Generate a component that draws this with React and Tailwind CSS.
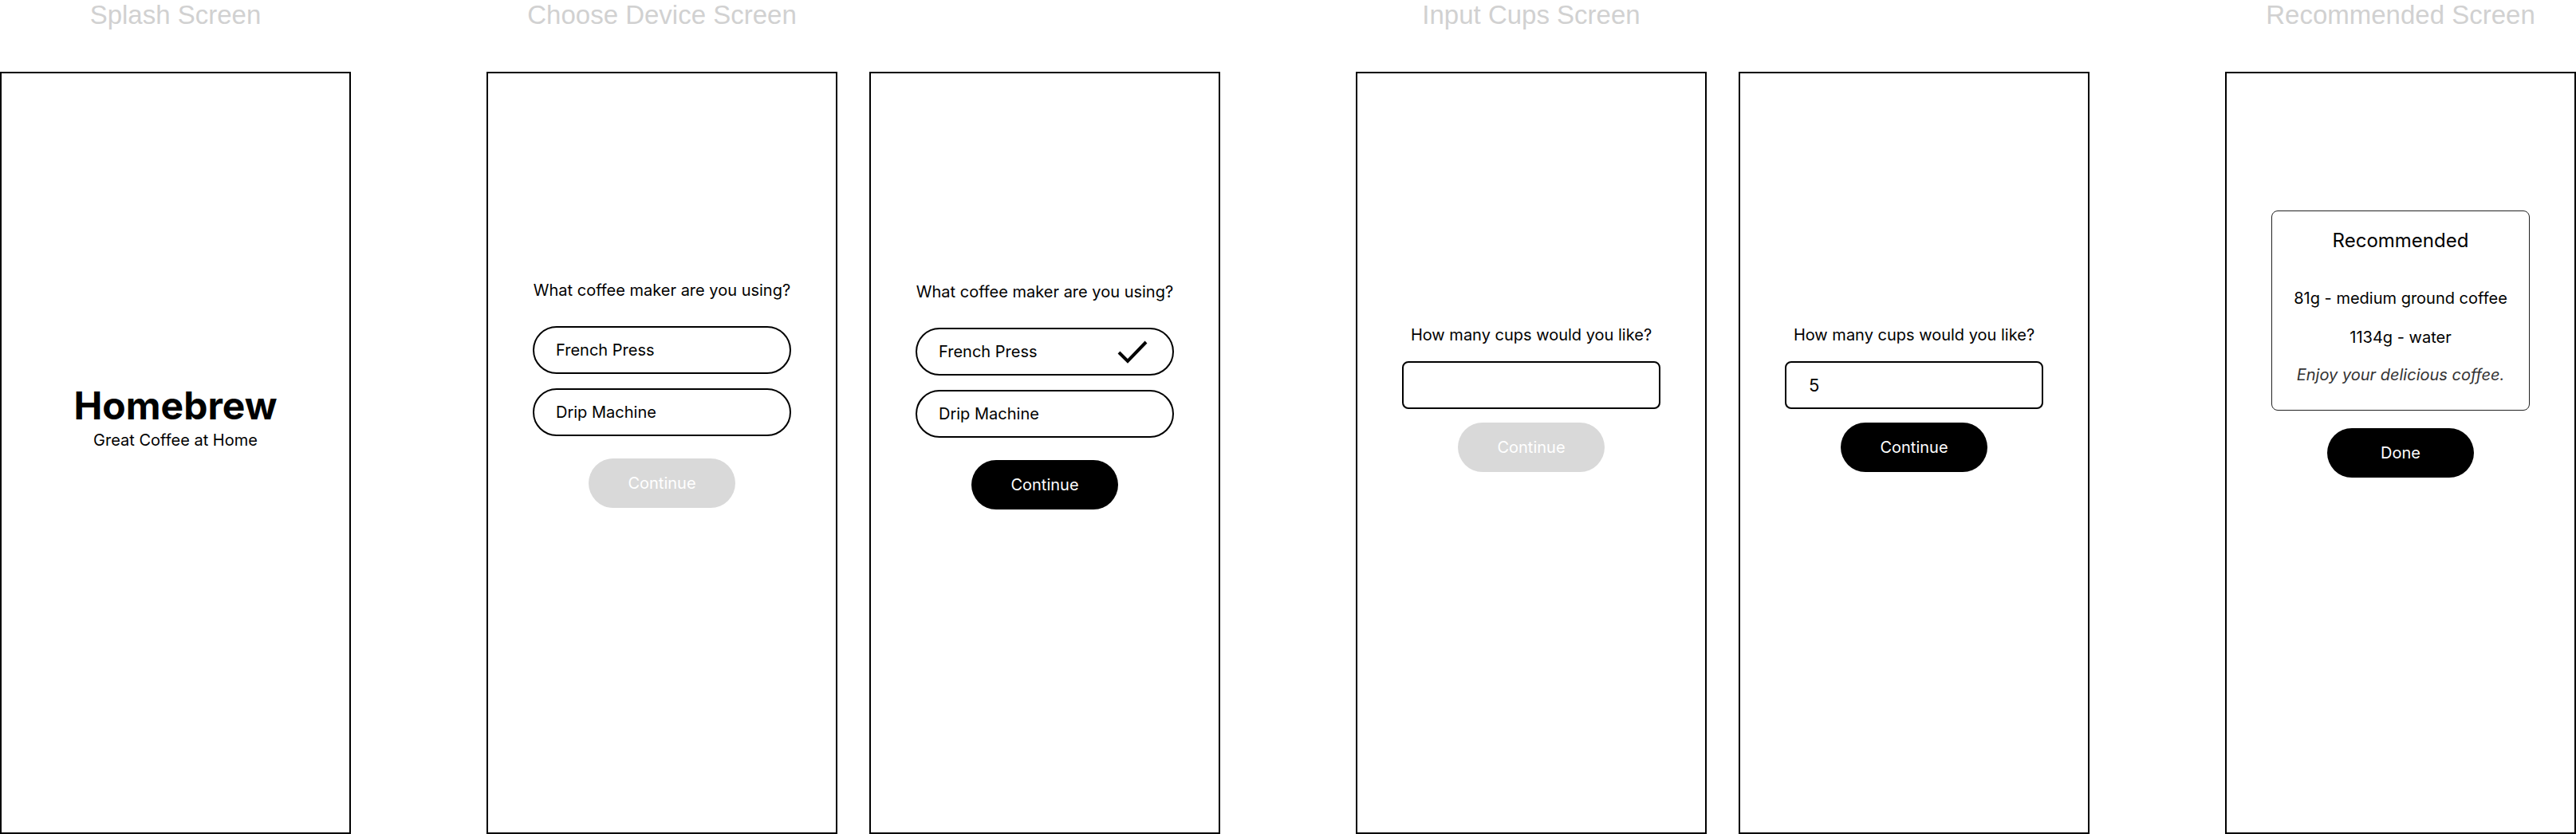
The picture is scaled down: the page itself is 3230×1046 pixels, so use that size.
import React from 'react';

const Column = ({ title, children }) => (
  <div className="flex flex-col w-[440px] shrink-0">
    <div className="h-[90px] text-center font-['Liberation_Sans',Arial,sans-serif] text-[33px] leading-[38px] text-[#d1d1d1]">
      {title}
    </div>
    <div className="h-[956px] w-[440px] border-2 border-black bg-white flex flex-col items-center">
      {children}
    </div>
  </div>
);

const Question = ({ children }) => (
  <p className="text-[20px] leading-[28px] text-black">{children}</p>
);

const Option = ({ label, checked, className = '' }) => (
  <button
    type="button"
    className={`w-[324px] h-[60px] border-2 border-black rounded-full pl-[27px] pr-[31px] flex items-center justify-between text-[20px] text-black ${className}`}
  >
    <span>{label}</span>
    {checked && (
      <svg width="38" height="30" viewBox="0 0 38 30" fill="none">
        <polyline points="2,16 13,27 36,3" stroke="black" strokeWidth="4" strokeLinejoin="miter" />
      </svg>
    )}
  </button>
);

const PillButton = ({ label, disabled, className = '' }) => (
  <button
    type="button"
    className={`w-[184px] h-[62px] rounded-full text-[20px] text-white ${
      disabled ? 'bg-[#d9d9d9]' : 'bg-black'
    } ${className}`}
  >
    {label}
  </button>
);

const CupsInput = ({ value }) => (
  <input
    type="text"
    readOnly
    defaultValue={value}
    className="mt-[19px] w-[324px] h-[60px] border-2 border-black rounded-[8px] px-[28px] text-[22px] text-black outline-none"
  />
);

export default function App() {
  return (
    <div className="w-[3230px] h-[1046px] overflow-hidden bg-white flex gap-[170px] font-[Inter,sans-serif]">
      {/* Splash */}
      <Column title="Splash Screen">
        <h1 className="mt-[388px] text-[48px] leading-[58px] font-bold text-black">Homebrew</h1>
        <p className="text-[20px] leading-[28px] text-black">Great Coffee at Home</p>
      </Column>

      {/* Choose device */}
      <div className="flex gap-[40px]">
        <Column title="Choose Device Screen">
          <div className="mt-[258px] flex flex-col items-center">
            <Question>What coffee maker are you using?</Question>
            <Option label="French Press" className="mt-[31px]" />
            <Option label="Drip Machine" className="mt-[18px]" />
            <PillButton label="Continue" disabled className="mt-[28px]" />
          </div>
        </Column>
        <Column title="">
          <div className="mt-[260px] flex flex-col items-center">
            <Question>What coffee maker are you using?</Question>
            <Option label="French Press" checked className="mt-[31px]" />
            <Option label="Drip Machine" className="mt-[18px]" />
            <PillButton label="Continue" className="mt-[28px]" />
          </div>
        </Column>
      </div>

      {/* Input cups */}
      <div className="flex gap-[40px]">
        <Column title="Input Cups Screen">
          <div className="mt-[314px] flex flex-col items-center">
            <Question>How many cups would you like?</Question>
            <CupsInput value="" />
            <PillButton label="Continue" disabled className="mt-[17px]" />
          </div>
        </Column>
        <Column title="">
          <div className="mt-[314px] flex flex-col items-center">
            <Question>How many cups would you like?</Question>
            <CupsInput value="5" />
            <PillButton label="Continue" className="mt-[17px]" />
          </div>
        </Column>
      </div>

      {/* Recommended */}
      <Column title="Recommended Screen">
        <div className="mt-[172px] flex flex-col items-center">
          <div className="w-[324px] border border-[#222] rounded-[8px] pt-[21px] pb-[30px] flex flex-col items-center text-black">
            <h2 className="text-[24px] leading-[32px]">Recommended</h2>
            <p className="mt-[42px] text-[20px] leading-[28px]">81g - medium ground coffee</p>
            <p className="mt-[21px] text-[20px] leading-[28px]">1134g - water</p>
            <p className="mt-[19px] text-[20px] leading-[28px] italic text-[#333]">Enjoy your delicious coffee.</p>
          </div>
          <PillButton label="Done" className="mt-[22px]" />
        </div>
      </Column>
    </div>
  );
}
